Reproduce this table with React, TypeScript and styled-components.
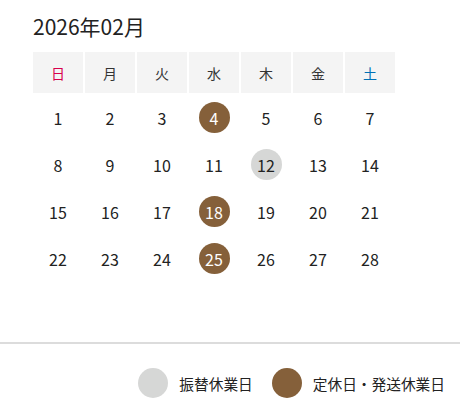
import React from "react";
import styled, { createGlobalStyle } from "styled-components";

const Global = createGlobalStyle`
  html, body { margin: 0; padding: 0; background: #fff; }
  body { font-family: "Noto Sans CJK JP", "Noto Sans", sans-serif; color: #222; }
`;

const Page = styled.div`
  width: 460px;
  display: flex;
  flex-direction: column;
`;

const CalendarArea = styled.div`
  padding: 10px 0 0 33px;
  height: 342px;
  box-sizing: border-box;
`;

const Title = styled.h2`
  margin: 0;
  font-size: 21px;
  font-weight: 400;
  line-height: 32px;
  height: 42px;
  color: #222;
`;

const Grid = styled.div`
  display: grid;
  grid-template-columns: repeat(7, 50px);
  column-gap: 2px;
`;

const HeadCell = styled.div<{ $tone: "sun" | "sat" | "none" }>`
  height: 41px;
  background: #f4f4f4;
  display: flex;
  align-items: center;
  justify-content: center;
  font-size: 14px;
  color: ${(p) => (p.$tone === "sun" ? "#d8004c" : p.$tone === "sat" ? "#0070b5" : "#333")};
  margin-bottom: 1px;
`;

const DayCell = styled.div`
  height: 47px;
  display: flex;
  align-items: center;
  justify-content: center;
`;

const Day = styled.span<{ $kind: "none" | "closed" | "sub" }>`
  width: 31px;
  height: 31px;
  border-radius: 50%;
  display: flex;
  align-items: center;
  justify-content: center;
  font-size: 16px;
  background: ${(p) => (p.$kind === "closed" ? "#85603a" : p.$kind === "sub" ? "#d6d7d6" : "transparent")};
  color: ${(p) => (p.$kind === "closed" ? "#fff" : "#222")};
`;

const Divider = styled.hr`
  margin: 0;
  border: none;
  border-top: 2px solid #dcdcdc;
  width: 460px;
`;

const Legend = styled.div`
  display: flex;
  justify-content: flex-end;
  align-items: center;
  padding: 24px 15px 0 0;
  gap: 19px;
`;

const LegendItem = styled.div`
  display: flex;
  align-items: center;
  gap: 11px;
  font-size: 14.7px;
  color: #222;
`;

const Swatch = styled.span<{ $color: string }>`
  width: 30px;
  height: 30px;
  border-radius: 50%;
  background: ${(p) => p.$color};
`;

const heads: { label: string; tone: "sun" | "sat" | "none" }[] = [
  { label: "日", tone: "sun" },
  { label: "月", tone: "none" },
  { label: "火", tone: "none" },
  { label: "水", tone: "none" },
  { label: "木", tone: "none" },
  { label: "金", tone: "none" },
  { label: "土", tone: "sat" },
];

const closed = new Set([4, 18, 25]);
const sub = new Set([12]);

export default function App() {
  const days = Array.from({ length: 28 }, (_, i) => i + 1);
  return (
    <Page>
      <Global />
      <CalendarArea>
        <Title>2026年02月</Title>
        <Grid>
          {heads.map((h) => (
            <HeadCell key={h.label} $tone={h.tone}>
              {h.label}
            </HeadCell>
          ))}
          {days.map((d) => (
            <DayCell key={d}>
              <Day $kind={closed.has(d) ? "closed" : sub.has(d) ? "sub" : "none"}>{d}</Day>
            </DayCell>
          ))}
        </Grid>
      </CalendarArea>
      <Divider />
      <Legend>
        <LegendItem>
          <Swatch $color="#d6d7d6" />
          振替休業日
        </LegendItem>
        <LegendItem>
          <Swatch $color="#85603a" />
          定休日・発送休業日
        </LegendItem>
      </Legend>
    </Page>
  );
}
